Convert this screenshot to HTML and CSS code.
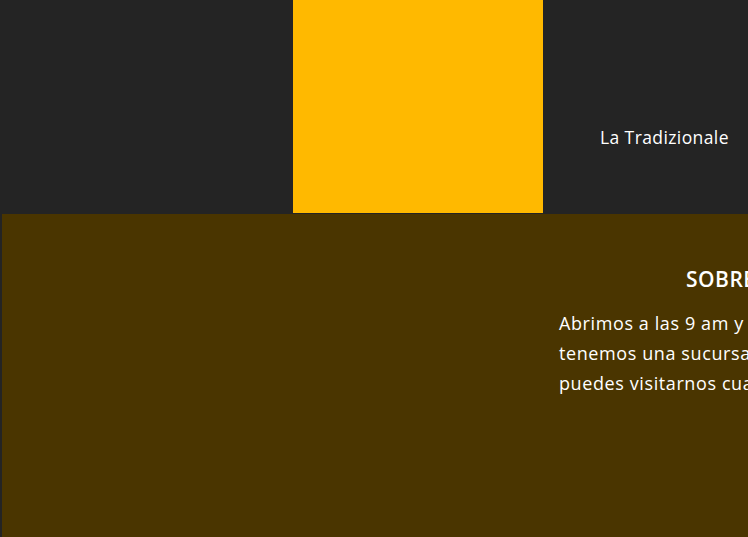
FILE: index.html
```html
<!DOCTYPE html>
<html lang="es">
<head>
<meta charset="utf-8">
<link rel="stylesheet" href="styles.css">
<title>La Tradizionale</title>
</head>
<body>
<div class="page">
  <header class="top">
    <div class="spacer"></div>
    <div class="swatch"></div>
    <div class="brand"><span>La Tradizionale</span></div>
  </header>
  <section class="about">
    <div class="about-col">
      <h2 class="about-title">SOBRE NOSOTROS</h2>
      <p class="about-text">Abrimos a las 9 am y cerramos a las 10 pm,<br>tenemos una sucursal en el centro de la ciudad,<br>puedes visitarnos cuando quieras.</p>
    </div>
  </section>
</div>
</body>
</html>
```
FILE: styles.css
```css
html, body {
  margin: 0;
  padding: 0;
  background: #242424;
  overflow: hidden;
}
body {
  font-family: "Open Sans", "Noto Sans", sans-serif;
  color: #ffffff;
}
.page {
  width: 748px;
  height: 537px;
  overflow: hidden;
}
.top {
  display: flex;
  height: 214px;
  background: #242424;
}
.spacer {
  width: 293px;
  flex: none;
}
.swatch {
  width: 250px;
  height: 213px;
  flex: none;
  background: #ffb900;
}
.brand {
  flex: none;
  padding-left: 57px;
  padding-top: 125px;
  font-size: 17.5px;
  font-weight: 500;
  letter-spacing: 0.4px;
  line-height: 24px;
  white-space: nowrap;
}
.about {
  margin-left: 2px;
  height: 323px;
  background: #4a3500;
  display: flex;
}
.about-col {
  padding-left: 557px;
  padding-top: 52px;
  white-space: nowrap;
}
.about-title {
  margin: 0 0 16px 127px;
  font-size: 21px;
  font-weight: 600;
  letter-spacing: 0.5px;
  line-height: 26px;
}
.about-text {
  margin: 0;
  font-size: 18px;
  font-weight: 500;
  letter-spacing: 0.6px;
  line-height: 30px;
}
```
